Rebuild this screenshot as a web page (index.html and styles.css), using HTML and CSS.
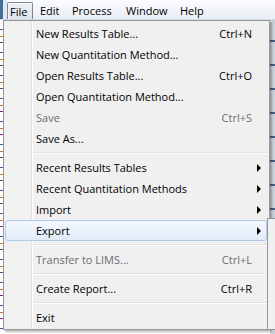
FILE: index.html
```html
<!DOCTYPE html>
<html>
<head>
<meta charset="utf-8">
<link rel="stylesheet" href="styles.css">
</head>
<body>
<div class="app">
  <div class="menubar">
    <span class="mb-corner"></span>
    <span class="mb-item mb-open mb-file">File</span>
    <span class="mb-item mb-edit">Edit</span>
    <span class="mb-item mb-process">Process</span>
    <span class="mb-item mb-window">Window</span>
    <span class="mb-item mb-help">Help</span>
  </div>
  <div class="workspace">
    <div class="ws-left"></div>
    <div class="ws-mid"></div>
    <div class="ws-right"></div>
  </div>

  <div class="menu">
    <div class="mi"><span class="lbl">New Results Table...</span><span class="sc">Ctrl+N</span><span class="arw"></span></div>
    <div class="mi"><span class="lbl">New Quantitation Method...</span><span class="sc"></span><span class="arw"></span></div>
    <div class="mi"><span class="lbl">Open Results Table...</span><span class="sc">Ctrl+O</span><span class="arw"></span></div>
    <div class="mi"><span class="lbl">Open Quantitation Method...</span><span class="sc"></span><span class="arw"></span></div>
    <div class="mi dis"><span class="lbl">Save</span><span class="sc">Ctrl+S</span><span class="arw"></span></div>
    <div class="mi"><span class="lbl">Save As...</span><span class="sc"></span><span class="arw"></span></div>
    <div class="sep"></div>
    <div class="mi"><span class="lbl">Recent Results Tables</span><span class="sc"></span><span class="arw"><i class="tri"></i></span></div>
    <div class="mi"><span class="lbl">Recent Quantitation Methods</span><span class="sc"></span><span class="arw"><i class="tri"></i></span></div>
    <div class="mi"><span class="lbl">Import</span><span class="sc"></span><span class="arw"><i class="tri"></i></span></div>
    <div class="mi hl"><span class="lbl">Export</span><span class="sc"></span><span class="arw"><i class="tri"></i></span></div>
    <div class="sep"></div>
    <div class="mi dis"><span class="lbl">Transfer to LIMS...</span><span class="sc">Ctrl+L</span><span class="arw"></span></div>
    <div class="sep"></div>
    <div class="mi"><span class="lbl">Create Report...</span><span class="sc">Ctrl+R</span><span class="arw"></span></div>
    <div class="sep"></div>
    <div class="mi"><span class="lbl">Exit</span><span class="sc"></span><span class="arw"></span></div>
  </div>
  <div class="submenu"></div>
</div>
</body>
</html>
```

FILE: styles.css
```css
* { box-sizing: border-box; }
html, body { margin: 0; padding: 0; }
body {
  width: 275px;
  height: 334px;
  overflow: hidden;
  background: #f4f4f4;
  font-family: "Open Sans", "Noto Sans", sans-serif;
  font-size: 11px;
  color: #000;
}
.app {
  position: relative;
  width: 275px;
  height: 334px;
  overflow: hidden;
  display: flex;
  flex-direction: column;
}
.menubar {
  height: 20px;
  display: flex;
  align-items: stretch;
  background: linear-gradient(#fbfcfe, #e9eef5);
  border-bottom: 1px solid #d3dae4;
}
.mb-corner {
  width: 7px;
  flex: none;
  background: linear-gradient(to right, #3f6f99 0 3px, #dfe8f2 3px);
}
.mb-item {
  flex: none;
  padding: 1px 0 0 7px;
  line-height: 19px;
  white-space: nowrap;
}
.mb-file { width: 26px; padding-left: 2px; }
.mb-edit { width: 32px; }
.mb-process { width: 54px; }
.mb-window { width: 54px; }
.mb-help { width: 40px; }
.mb-open {
  margin-top: 2px;
  padding-top: 0;
  line-height: 17px;
  border: 1px solid #7d8795;
  border-bottom: none;
  border-radius: 2px 2px 0 0;
  background: linear-gradient(#eef1f5, #dde3ea);
  box-shadow: inset 1px 1px 0 #f8fafc;
}
.workspace {
  flex: 1;
  display: flex;
  background: #fff;
}
.ws-left {
  width: 3px;
  background:
    repeating-linear-gradient(#fff 0 9px, #3a5fa8 9px 10px, #fff 10px 16px, #c97b1e 16px 17px, #fff 17px 22px, #7a2f8f 22px 23px);
}
.ws-mid { flex: 1; background: #fff; }
.ws-right {
  width: 5px;
  background:
    repeating-linear-gradient(#c9d2da 0 20px, #45627f 20px 22px, #c9d2da 22px 24px);
}

/* dropdown */
.menu {
  position: absolute;
  left: 3px;
  top: 20px;
  width: 267px;
  padding: 2px 0 1px 0;
  border: 1px solid #979797;
  background:
    linear-gradient(to right, #f1f1f1 0 27px, #e2e3e3 27px 28px, #ffffff 28px 29px, #f0f0f0 29px);
  box-shadow: 2px 2px 2px rgba(0, 0, 0, 0.28);
  display: flex;
  flex-direction: column;
  z-index: 2;
}
.mi {
  height: 21px;
  margin: 0 2px 0 1px;
  padding-left: 30px;
  border: 1px solid transparent;
  border-radius: 3px;
  display: flex;
  align-items: center;
  line-height: 19px;
  white-space: nowrap;
}
.mi .lbl { flex: 1; }
.mi .sc { text-align: right; }
.mi .arw {
  width: 14px;
  height: 19px;
  display: flex;
  align-items: center;
  padding-left: 5px;
}
.tri {
  width: 0;
  height: 0;
  border-left: 4px solid #000;
  border-top: 4px solid transparent;
  border-bottom: 4px solid transparent;
}
.dis { color: #6d6d6d; }
.hl {
  border-color: #aecbee;
  background: linear-gradient(#f4f8fd, #e1ebf8);
}
.sep {
  height: 8px;
  margin-left: 29px;
  margin-right: 2px;
  display: flex;
  flex-direction: column;
  justify-content: center;
}
.sep::before {
  content: "";
  display: block;
  height: 1px;
  background: #e0e0e0;
}
.sep::after {
  content: "";
  display: block;
  height: 1px;
  background: #ffffff;
}
.submenu {
  position: absolute;
  left: 267px;
  top: 218px;
  width: 8px;
  height: 112px;
  border: 1px solid #979797;
  border-right: none;
  background: #f0f0f0;
  z-index: 3;
}
```
